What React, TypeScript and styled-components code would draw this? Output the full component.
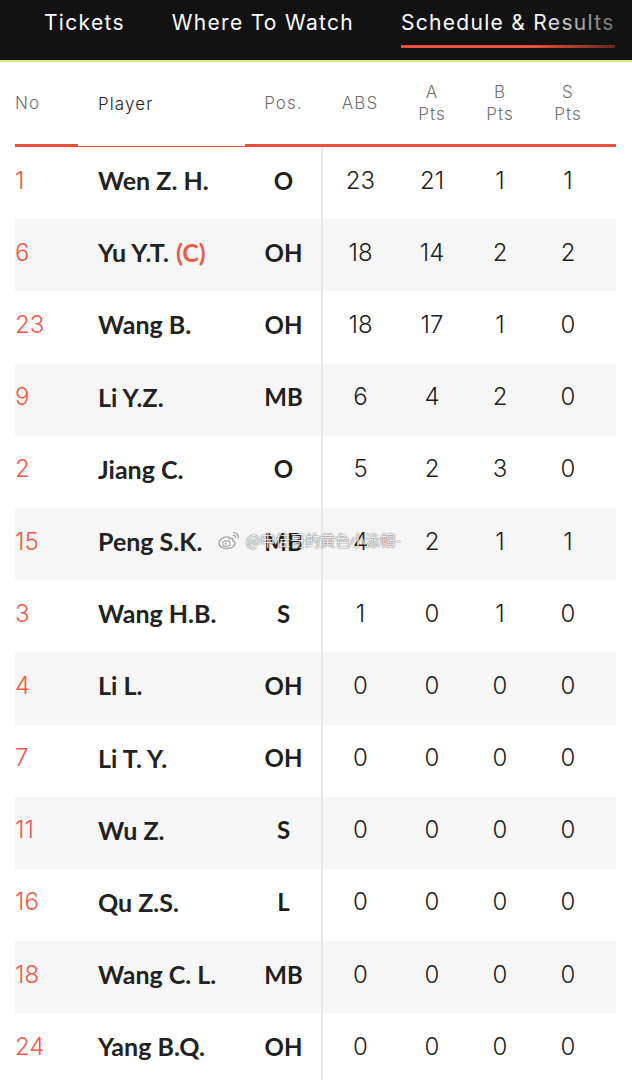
import React from "react";
import styled, { createGlobalStyle } from "styled-components";

const GlobalStyle = createGlobalStyle`
  html, body {
    margin: 0;
    padding: 0;
    background: #ffffff;
  }
  body {
    font-family: Inter, "Noto Sans", sans-serif;
    width: 632px;
    overflow: hidden;
  }
`;

const Page = styled.div`
  position: relative;
  width: 632px;
  height: 1080px;
  overflow: hidden;
`;

const Nav = styled.nav`
  position: relative;
  display: flex;
  align-items: flex-start;
  gap: 47px;
  height: 60px;
  padding: 0 0 0 44px;
  background: #121212;
  border-bottom: 2px solid #d6ec7e;
  box-sizing: content-box;
  overflow: hidden;
`;

const Tab = styled.div<{ $active?: boolean }>`
  flex: none;
  position: relative;
  padding: 9px 0 9px;
  line-height: 26px;
  font-size: 21px;
  font-weight: 400;
  letter-spacing: 1.3px;
  color: #ffffff;
  white-space: nowrap;
  border-bottom: 3px solid ${p => (p.$active ? "#ee4f3d" : "transparent")};
  margin-top: 1px;
`;

const NavFade = styled.div`
  position: absolute;
  top: 0;
  right: 0;
  width: 100px;
  height: 60px;
  background: linear-gradient(to right, rgba(18, 18, 18, 0) 0%, rgba(18, 18, 18, 0.75) 100%);
  pointer-events: none;
`;

const Table = styled.div`
  margin: 0 16px 0 15px;
`;

const cols = "63px 167px 77px 76px 68px 68px 82px";

const HeadRow = styled.div`
  display: grid;
  grid-template-columns: ${cols};
  height: 85px;
`;

const HeadCell = styled.div<{ $thin?: boolean; $align?: string; $dark?: boolean; $pad?: number }>`
  display: flex;
  flex-direction: column;
  justify-content: center;
  align-items: ${p => (p.$align && p.$align !== "last" ? p.$align : "center")};
  padding-left: ${p => p.$pad || 0}px;
  padding-right: ${p => (p.$align === "last" ? 14 : 0)}px;
  font-size: 17px;
  font-weight: 300;
  line-height: 22px;
  letter-spacing: 1.1px;
  color: ${p => (p.$dark ? "#1e1e1e" : "#707070")};
  border-bottom: ${p => (p.$thin ? "1.5px" : "3px")} solid #ee4f3d;
  box-sizing: border-box;
  text-align: center;
`;

const Row = styled.div<{ $shade?: boolean }>`
  display: grid;
  grid-template-columns: ${cols};
  height: 72.2px;
  background: ${p => (p.$shade ? "#f6f6f6" : "#ffffff")};
`;

const Cell = styled.div<{ $divider?: boolean; $last?: boolean }>`
  display: flex;
  align-items: center;
  justify-content: center;
  font-size: 24px;
  font-weight: 300;
  color: #1e1e1e;
  padding-bottom: 6px;
  padding-right: ${p => (p.$last ? 14 : 0)}px;
  border-left: ${p => (p.$divider ? "2px solid #e8e8e8" : "none")};
  margin-left: ${p => (p.$divider ? "-1px" : "0")};
`;

const NoCell = styled(Cell)`
  justify-content: flex-start;
  color: #ee5a47;
`;

const NameCell = styled(Cell)`
  justify-content: flex-start;
  padding-left: 20px;
  font-family: Lato, "Noto Sans", sans-serif;
  font-weight: 700;
  font-size: 25px;
  color: #222222;
  white-space: nowrap;
`;

const PosCell = styled(Cell)`
  font-family: Lato, "Noto Sans", sans-serif;
  font-weight: 700;
  font-size: 24px;
`;

const Captain = styled.span`
  color: #ee5a47;
  margin-left: 7px;
`;

const Watermark = styled.div`
  position: absolute;
  left: 217px;
  top: 528px;
  display: flex;
  align-items: center;
  gap: 4px;
  font-family: "Noto Sans CJK SC", "Noto Sans", sans-serif;
  font-size: 15px;
  line-height: 24px;
  color: rgba(255, 255, 255, 0.92);
  text-shadow: 0 0 1px rgba(60, 60, 60, 0.9), 0 0 2px rgba(60, 60, 60, 0.6);
  opacity: 0.9;
  pointer-events: none;
`;

const WeiboIcon = () => (
  <svg width="25" height="21" viewBox="0 0 24 20" fill="none">
    <path
      d="M9.5 6.5c-3.5 0-7.5 2.8-7.5 6.2 0 2.9 3.3 5 7.4 5 4.6 0 8-2.3 8-4.9 0-1.6-1.4-2.3-2.3-2.5.6-1.3.3-2.8-1.6-2.5-.8.1-1.5.5-1.5.5s.3-1.8-2.5-1.8z"
      stroke="#9a9a9a"
      strokeWidth="1.3"
      fill="rgba(255,255,255,0.8)"
    />
    <ellipse cx="9" cy="13" rx="3.6" ry="2.6" stroke="#9a9a9a" strokeWidth="1.1" />
    <circle cx="8.4" cy="13.2" r="1" fill="#9a9a9a" />
    <path d="M16 2.5c2.8 0 4.8 2.3 4.3 5" stroke="#9a9a9a" strokeWidth="1.3" strokeLinecap="round" />
    <path d="M15.8 5c1.3 0 2.2 1 2 2.3" stroke="#9a9a9a" strokeWidth="1.2" strokeLinecap="round" />
  </svg>
);

type Player = {
  no: string;
  name: string;
  captain?: boolean;
  pos: string;
  abs: string;
  a: string;
  b: string;
  s: string;
};

const players: Player[] = [
  { no: "1", name: "Wen Z. H.", pos: "O", abs: "23", a: "21", b: "1", s: "1" },
  { no: "6", name: "Yu Y.T.", captain: true, pos: "OH", abs: "18", a: "14", b: "2", s: "2" },
  { no: "23", name: "Wang B.", pos: "OH", abs: "18", a: "17", b: "1", s: "0" },
  { no: "9", name: "Li Y.Z.", pos: "MB", abs: "6", a: "4", b: "2", s: "0" },
  { no: "2", name: "Jiang C.", pos: "O", abs: "5", a: "2", b: "3", s: "0" },
  { no: "15", name: "Peng S.K.", pos: "MB", abs: "4", a: "2", b: "1", s: "1" },
  { no: "3", name: "Wang H.B.", pos: "S", abs: "1", a: "0", b: "1", s: "0" },
  { no: "4", name: "Li L.", pos: "OH", abs: "0", a: "0", b: "0", s: "0" },
  { no: "7", name: "Li T. Y.", pos: "OH", abs: "0", a: "0", b: "0", s: "0" },
  { no: "11", name: "Wu Z.", pos: "S", abs: "0", a: "0", b: "0", s: "0" },
  { no: "16", name: "Qu Z.S.", pos: "L", abs: "0", a: "0", b: "0", s: "0" },
  { no: "18", name: "Wang C. L.", pos: "MB", abs: "0", a: "0", b: "0", s: "0" },
  { no: "24", name: "Yang B.Q.", pos: "OH", abs: "0", a: "0", b: "0", s: "0" }
];

const App = () => {
  return (
    <Page>
      <GlobalStyle />
      <Nav>
        <Tab>Tickets</Tab>
        <Tab>Where To Watch</Tab>
        <Tab $active>Schedule &amp; Results</Tab>
        <NavFade />
      </Nav>
      <Table>
        <HeadRow>
          <HeadCell $align="flex-start">No</HeadCell>
          <HeadCell $align="flex-start" $pad={20} $thin $dark>
            Player
          </HeadCell>
          <HeadCell>Pos.</HeadCell>
          <HeadCell>ABS</HeadCell>
          <HeadCell>
            <span>A</span>
            <span>Pts</span>
          </HeadCell>
          <HeadCell>
            <span>B</span>
            <span>Pts</span>
          </HeadCell>
          <HeadCell $align="last">
            <span>S</span>
            <span>Pts</span>
          </HeadCell>
        </HeadRow>
        {players.map((p, i) => (
          <Row key={p.no} $shade={i % 2 === 1}>
            <NoCell>{p.no}</NoCell>
            <NameCell>
              {p.name}
              {p.captain && <Captain>(C)</Captain>}
            </NameCell>
            <PosCell>{p.pos}</PosCell>
            <Cell $divider>{p.abs}</Cell>
            <Cell>{p.a}</Cell>
            <Cell>{p.b}</Cell>
            <Cell $last>{p.s}</Cell>
          </Row>
        ))}
      </Table>
      <Watermark>
        <WeiboIcon />
        <span>@申佳哥的黄色小泳帽-</span>
      </Watermark>
    </Page>
  );
};

export default App;
